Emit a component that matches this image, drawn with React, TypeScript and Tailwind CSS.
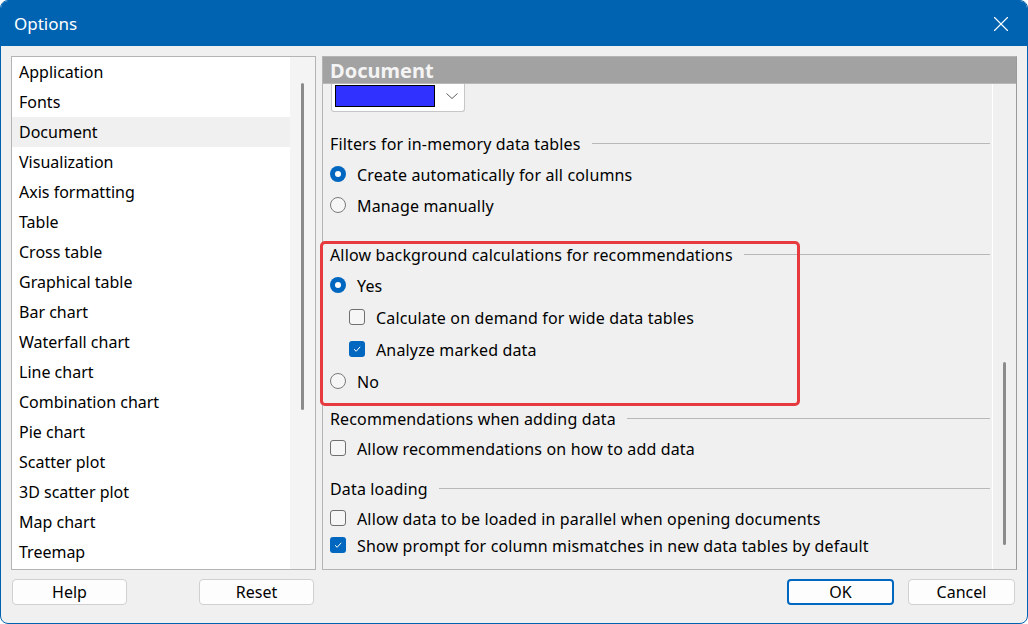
import { X } from 'lucide-react';

const categories = [
  'Application',
  'Fonts',
  'Document',
  'Visualization',
  'Axis formatting',
  'Table',
  'Cross table',
  'Graphical table',
  'Bar chart',
  'Waterfall chart',
  'Line chart',
  'Combination chart',
  'Pie chart',
  'Scatter plot',
  '3D scatter plot',
  'Map chart',
  'Treemap',
];

function Radio({ checked }: { checked?: boolean }) {
  return checked ? (
    <span className="w-4 h-4 rounded-full bg-[#0067c0] flex items-center justify-center shrink-0">
      <span className="w-[6px] h-[6px] rounded-full bg-white" />
    </span>
  ) : (
    <span className="w-4 h-4 rounded-full border border-[#7a7a7a] bg-[#f6f6f6] shrink-0" />
  );
}

function Check({ checked }: { checked?: boolean }) {
  return checked ? (
    <span className="w-4 h-4 rounded-[3px] bg-[#0067c0] flex items-center justify-center shrink-0">
      <svg width="10" height="10" viewBox="0 0 10 10" fill="none">
        <path d="M2 5.2 L4.2 7.3 L8.2 2.8" stroke="white" strokeWidth="1" />
      </svg>
    </span>
  ) : (
    <span className="w-4 h-4 rounded-[3px] border border-[#6f6f6f] bg-[#f6f6f6] shrink-0" />
  );
}

function GroupTitle({ label, className }: { label: string; className: string }) {
  return (
    <div className={`flex items-center ${className}`}>
      <span className="pt-px">{label}</span>
      <span className="flex-1 h-px bg-[#b8b8b8] ml-[11px]" />
    </div>
  );
}

function Row({ children, className }: { children: React.ReactNode; className: string }) {
  return <div className={`flex items-center gap-[11px] ${className}`}>{children}</div>;
}

function Label({ text }: { text: string }) {
  return <span className="pt-[2px]">{text}</span>;
}

function DialogButton({ label, focused }: { label: string; focused?: boolean }) {
  return (
    <button
      className={`w-[107px] h-[26px] rounded-[4px] bg-[#fdfdfd] text-[16px] text-black flex items-center justify-center ${
        focused ? 'border-2 border-[#0067c0]' : 'border border-[#d0d0d0]'
      }`}
    >
      {label}
    </button>
  );
}

export default function App() {
  return (
    <div
      className="w-[1028px] h-[624px] bg-white text-black text-[16px]"
      style={{ fontFamily: '"Noto Sans", "Open Sans", sans-serif' }}
    >
      <div className="relative w-full h-full rounded-[8px] border border-[#0063b1] bg-[#f0f0f0] overflow-hidden flex flex-col">
        {/* title bar */}
        <div className="h-[45px] bg-[#0063b1] flex items-center justify-between pl-[13px] pr-[13px] text-white shrink-0">
          <span className="text-[17px]">Options</span>
          <X className="w-[26px] h-[26px]" strokeWidth={1} />
        </div>

        <div className="flex gap-[6px] pl-[10px] pr-[10px] pt-[10px]">
          {/* category list */}
          <div className="w-[305px] h-[514px] border border-[#b4b4b4] bg-white flex">
            <div className="flex-1 flex flex-col">
              {categories.map((c) => (
                <div
                  key={c}
                  className={`h-[30px] flex items-center pl-[7px] ${c === 'Document' ? 'bg-[#f0f0f0]' : ''}`}
                >
                  {c}
                </div>
              ))}
            </div>
            <div className="w-[25px] bg-[#f4f4f4] flex justify-center pt-[26px]">
              <span className="w-[3px] h-[327px] rounded-full bg-[#8b8b8b]" />
            </div>
          </div>

          {/* settings page */}
          <div className="w-[695px] h-[514px] border border-[#b4b4b4] border-r-[#9a9a9a] flex flex-col">
            <div className="h-[27px] bg-[#a2a2a2] border-b border-[#b8b8b8] flex items-center pl-[7px] shrink-0">
              <span className="text-[20px] font-bold text-[#f4f4f4] leading-none pt-[2px]">Document</span>
            </div>
            <div className="flex flex-1 overflow-hidden">
              <div className="flex-1 pl-[7px] pr-[2px] tracking-[0.15px]">
                {/* scrolled colour picker */}
                <div className="ml-[1px] w-[134px] h-[28px] bg-white border border-t-0 border-[#c6c6c6] rounded-b-[3px] flex items-start pl-[3px] pt-px">
                  <span className="w-[100px] h-[22px] bg-[#3030ff] border border-black" />
                  <svg className="ml-[10px] mt-[6px]" width="14" height="10" viewBox="0 0 14 10" fill="none">
                    <path d="M1.5 2.5 L7 7.5 L12.5 2.5" stroke="#606060" strokeWidth="1" />
                  </svg>
                </div>

                <GroupTitle label="Filters for in-memory data tables" className="h-[30px] mt-[16px]" />
                <Row className="h-[31px]">
                  <Radio checked />
                  <Label text="Create automatically for all columns" />
                </Row>
                <Row className="h-[31px]">
                  <Radio />
                  <Label text="Manage manually" />
                </Row>

                <GroupTitle label="Allow background calculations for recommendations" className="h-[30px] mt-[19px]" />
                <Row className="h-[32px]">
                  <Radio checked />
                  <Label text="Yes" />
                </Row>
                <Row className="h-[32px] pl-[19px]">
                  <Check />
                  <Label text="Calculate on demand for wide data tables" />
                </Row>
                <Row className="h-[32px] pl-[19px]">
                  <Check checked />
                  <Label text="Analyze marked data" />
                </Row>
                <Row className="h-[31px]">
                  <Radio />
                  <Label text="No" />
                </Row>

                <GroupTitle label="Recommendations when adding data" className="h-[30px] mt-[7px]" />
                <Row className="h-[30px]">
                  <Check />
                  <Label text="Allow recommendations on how to add data" />
                </Row>

                <GroupTitle label="Data loading" className="h-[30px] mt-[10px]" />
                <Row className="h-[30px]">
                  <Check />
                  <Label text="Allow data to be loaded in parallel when opening documents" />
                </Row>
                <Row className="h-[24px]">
                  <Check checked />
                  <Label text="Show prompt for column mismatches in new data tables by default" />
                </Row>
              </div>
              <div className="w-[24px] border-l border-white flex justify-center pt-[278px]">
                <span className="w-[3px] h-[183px] rounded-full bg-[#8b8b8b]" />
              </div>
            </div>
          </div>
        </div>

        {/* footer buttons */}
        <div className="flex items-center pt-[9px] pl-[11px] pr-[12px]">
          <div className="flex w-[302px] justify-between">
            <button className="w-[115px] h-[26px] rounded-[4px] bg-[#fdfdfd] border border-[#d0d0d0] text-[16px]">Help</button>
            <button className="w-[115px] h-[26px] rounded-[4px] bg-[#fdfdfd] border border-[#d0d0d0] text-[16px]">Reset</button>
          </div>
          <div className="flex-1 flex justify-end gap-[14px]">
            <DialogButton label="OK" focused />
            <DialogButton label="Cancel" />
          </div>
        </div>

        {/* highlight around the recommendations group */}
        <div className="absolute left-[319px] top-[240px] w-[480px] h-[165px] border-[3px] border-[#e63a3e] rounded-[5px] pointer-events-none" />
      </div>
    </div>
  );
}
